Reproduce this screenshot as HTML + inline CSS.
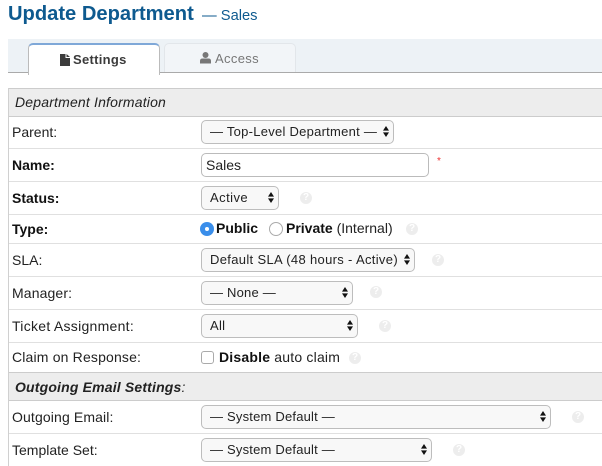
<!DOCTYPE html>
<html><head><meta charset="utf-8">
<style>
html,body{margin:0;padding:0;background:#fff;width:602px;height:466px;overflow:hidden}
body{position:relative;font-family:"Liberation Sans",sans-serif;font-size:14px;color:#111}
.a{position:absolute;white-space:nowrap}
.line{position:absolute;left:9px;right:0;height:1px;background:#e0e0e0}
.lab{position:absolute;left:12px;line-height:16px;white-space:nowrap;font-size:14px;color:#222}
.sel{position:absolute;left:201px;height:22px;border:1px solid #bdbdbd;border-radius:5px;background:#f8f8f8;line-height:21px;font-size:13px;color:#222;padding-left:8px;white-space:nowrap;box-sizing:content-box;letter-spacing:.3px}
.sel svg{position:absolute;right:4px;top:5px}
.help{position:absolute;width:12px;height:12px;border-radius:50%;background:#ededed;color:#fff;font-size:10px;font-weight:bold;line-height:12px;text-align:center}
.sec{position:absolute;left:9px;right:0;background:#ededed}
</style></head><body>
<div class="a" style="left:8px;top:2px;font-size:20.15px;font-weight:bold;color:#0e5a8f;line-height:24px">Update Department</div>
<div class="a" style="left:202px;top:6px;font-size:14.7px;color:#0e5a8f;line-height:20px">— Sales</div>

<div class="a" style="left:8px;top:39px;width:594px;height:33px;background:#edf2f6;border-bottom:1px solid #aaa"></div>
<div class="a" style="left:164px;top:43px;width:130px;height:28px;background:#f2f5f8;border:1px solid #e2e6ea;border-bottom:0;border-radius:5px 5px 0 0"></div>
<div class="a" style="left:28px;top:43px;width:130px;height:30px;background:#fff;border:1px solid #bbb;border-top:2px solid #7fa8d8;border-bottom:0;border-radius:5px 5px 0 0;box-sizing:content-box"></div>
<svg class="a" style="left:60px;top:54px" width="10" height="12" viewBox="0 0 10 12"><path d="M0 0H5.500V4H10V12H0Z M6.500 0L10 3H6.500Z" fill="#3c3c3c"/></svg>
<div class="a" style="left:73px;top:52px;font-size:13px;font-weight:bold;color:#3b3b3b;line-height:16px;letter-spacing:.3px">Settings</div>
<svg class="a" style="left:200px;top:52px" width="11" height="12" viewBox="0 0 11 12"><circle cx="5.500" cy="3" r="3" fill="#777"/><path d="M0 11.500V9Q0 6.500 2.500 6.500H8.500Q11 6.500 11 9V11.500Z" fill="#777"/></svg>
<div class="a" style="left:215px;top:51px;font-size:13px;color:#777;line-height:16px;letter-spacing:.35px">Access</div>

<div class="a" style="left:8px;top:88px;width:1px;height:378px;background:#d0d0d0"></div>
<div class="sec" style="top:88px;height:27px;border-top:1px solid #ccc;border-bottom:1px solid #ccc"></div>
<div class="a" style="left:15px;top:94px;font-size:14px;font-style:italic;color:#222;line-height:16px;letter-spacing:.18px">Department Information</div>

<div class="line" style="top:148px"></div>
<div class="line" style="top:181px"></div>
<div class="line" style="top:214px"></div>
<div class="line" style="top:243px"></div>
<div class="line" style="top:276px"></div>
<div class="line" style="top:309px"></div>
<div class="line" style="top:342px"></div>
<div class="line" style="top:433px"></div>

<div class="sec" style="top:372px;height:27px;border-top:1px solid #ccc;border-bottom:1px solid #ccc"></div>
<div class="a" style="left:15px;top:379px;font-size:14px;font-style:italic;font-weight:bold;color:#222;line-height:16px;letter-spacing:.17px">Outgoing Email Settings<span style="font-weight:normal">:</span></div>

<div class="lab" style="top:124px">Parent:</div>
<div class="lab" style="top:157px"><b style="color:#111">Name:</b></div>
<div class="lab" style="top:190px"><b style="color:#111">Status:</b></div>
<div class="lab" style="top:221px"><b style="color:#111">Type:</b></div>
<div class="lab" style="top:252px">SLA:</div>
<div class="lab" style="top:285px;letter-spacing:.12px">Manager:</div>
<div class="lab" style="top:318px;letter-spacing:.28px">Ticket Assignment:</div>
<div class="lab" style="top:349px;letter-spacing:.17px">Claim on Response:</div>
<div class="lab" style="top:409px;letter-spacing:.13px">Outgoing Email:</div>
<div class="lab" style="top:442px">Template Set:</div>

<div class="sel" style="top:120px;width:183px;letter-spacing:.26px">— Top-Level Department —<svg width="6" height="11" viewBox="0 0 7 12" preserveAspectRatio="none"><path d="M3.500 0L7 5H0ZM0 7H7L3.500 12Z" fill="#111"/></svg></div>
<div class="a" style="left:201px;top:153px;width:226px;height:22px;border:1px solid #bbb;border-radius:5px;background:#fff"></div>
<div class="a" style="left:206px;top:157px;font-size:14px;line-height:16px;color:#222">Sales</div>
<div class="a" style="left:437px;top:157px;font-size:10px;line-height:10px;color:#e33">*</div>
<div class="sel" style="top:186px;width:68px;letter-spacing:.45px">Active<svg width="6" height="11" viewBox="0 0 7 12" preserveAspectRatio="none"><path d="M3.500 0L7 5H0ZM0 7H7L3.500 12Z" fill="#111"/></svg></div>
<div class="help" style="left:300px;top:192px">?</div>

<div class="a" style="left:200px;top:222px;width:14px;height:14px;border-radius:50%;background:#3a8eea"></div>
<div class="a" style="left:205px;top:227px;width:4px;height:4px;border-radius:50%;background:#fff"></div>
<div class="a" style="left:216px;top:220px;font-size:14px;font-weight:bold;line-height:16px">Public</div>
<div class="a" style="left:269px;top:222px;width:12px;height:12px;border-radius:50%;background:#fff;border:1px solid #aaa"></div>
<div class="a" style="left:286px;top:220px;font-size:14px;line-height:16px;color:#222"><b style="color:#111">Private</b> (Internal)</div>
<div class="help" style="left:406px;top:223px">?</div>

<div class="sel" style="top:248px;width:204px;letter-spacing:.33px">Default SLA (48 hours - Active)<svg width="6" height="11" viewBox="0 0 7 12" preserveAspectRatio="none"><path d="M3.500 0L7 5H0ZM0 7H7L3.500 12Z" fill="#111"/></svg></div>
<div class="help" style="left:432px;top:254px">?</div>
<div class="sel" style="top:281px;width:142px;letter-spacing:.2px">— None —<svg width="6" height="11" viewBox="0 0 7 12" preserveAspectRatio="none"><path d="M3.500 0L7 5H0ZM0 7H7L3.500 12Z" fill="#111"/></svg></div>
<div class="help" style="left:370px;top:286px">?</div>
<div class="sel" style="top:314px;width:147px">All<svg width="6" height="11" viewBox="0 0 7 12" preserveAspectRatio="none"><path d="M3.500 0L7 5H0ZM0 7H7L3.500 12Z" fill="#111"/></svg></div>
<div class="help" style="left:379px;top:320px">?</div>

<div class="a" style="left:201px;top:351px;width:11px;height:11px;border:1px solid #aaa;border-radius:3px;background:#fff"></div>
<div class="a" style="left:219px;top:349px;font-size:14px;line-height:16px;color:#222;letter-spacing:.2px"><b style="color:#111">Disable</b> auto claim</div>
<div class="help" style="left:349px;top:352px">?</div>

<div class="sel" style="top:405px;width:340px;letter-spacing:.2px">— System Default —<svg width="6" height="11" viewBox="0 0 7 12" preserveAspectRatio="none"><path d="M3.500 0L7 5H0ZM0 7H7L3.500 12Z" fill="#111"/></svg></div>
<div class="help" style="left:572px;top:411px">?</div>
<div class="sel" style="top:438px;width:221px;letter-spacing:.2px">— System Default —<svg width="6" height="11" viewBox="0 0 7 12" preserveAspectRatio="none"><path d="M3.500 0L7 5H0ZM0 7H7L3.500 12Z" fill="#111"/></svg></div>
<div class="help" style="left:453px;top:444px">?</div>
</body></html>
